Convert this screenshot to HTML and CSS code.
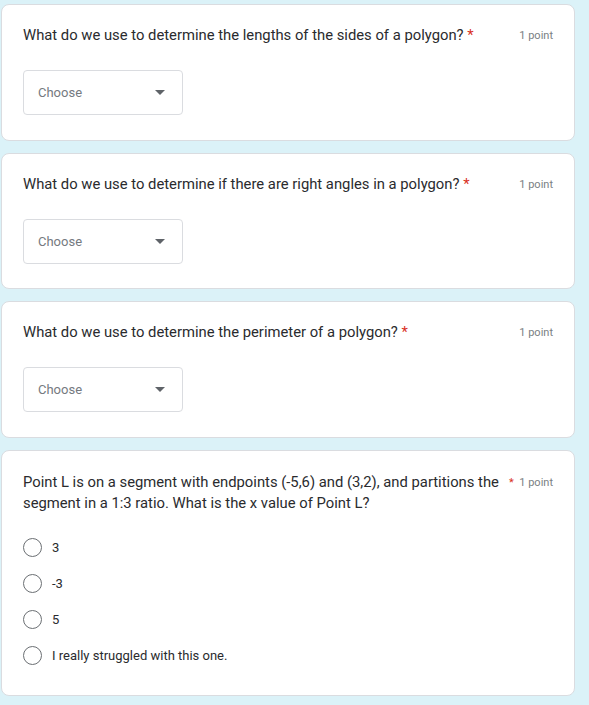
FILE: index.html
```html
<!DOCTYPE html>
<html>
<head>
<meta charset="utf-8">
<link rel="stylesheet" href="styles.css">
</head>
<body>
<div class="form">
  <div class="card">
    <div class="head">
      <div class="q">What do we use to determine the lengths of the sides of a polygon? <span class="req">*</span></div>
      <div class="pts">1 point</div>
    </div>
    <div class="select"><span>Choose</span><span class="arrow"></span></div>
  </div>
  <div class="card">
    <div class="head">
      <div class="q">What do we use to determine if there are right angles in a polygon? <span class="req">*</span></div>
      <div class="pts">1 point</div>
    </div>
    <div class="select"><span>Choose</span><span class="arrow"></span></div>
  </div>
  <div class="card">
    <div class="head">
      <div class="q">What do we use to determine the perimeter of a polygon? <span class="req">*</span></div>
      <div class="pts">1 point</div>
    </div>
    <div class="select"><span>Choose</span><span class="arrow"></span></div>
  </div>
  <div class="card card-radio">
    <div class="head">
      <div class="q q-long">Point L is on a segment with endpoints (-5,6) and (3,2), and partitions the segment in a 1:3 ratio. What is the x value of Point L?</div>
      <div class="pts"><span class="req">*</span>&nbsp; 1 point</div>
    </div>
    <div class="options">
      <div class="opt"><span class="radio"></span><span>3</span></div>
      <div class="opt"><span class="radio"></span><span>-3</span></div>
      <div class="opt"><span class="radio"></span><span>5</span></div>
      <div class="opt"><span class="radio"></span><span>I really struggled with this one.</span></div>
    </div>
  </div>
</div>
</body>
</html>
```
FILE: styles.css
```css
html, body {
  margin: 0;
  padding: 0;
  background: #dbf2f8;
}
body {
  font-family: Roboto, "Liberation Sans", Arial, sans-serif;
  color: #202124;
}
.form {
  display: flex;
  flex-direction: column;
  gap: 12px;
  padding: 4px 0 0 1px;
  width: 574px;
}
.card {
  background: #fff;
  border: 1px solid #dadce0;
  border-radius: 8px;
  padding: 20px 21px 24px 21px;
  height: 136.5px;
  box-sizing: border-box;
  display: flex;
  flex-direction: column;
}
.card-radio {
  height: 246.5px;
  padding-top: 21px;
}
.head {
  display: flex;
  justify-content: space-between;
  align-items: flex-start;
}
.q {
  font-size: 14.8px;
  line-height: 21px;
  color: #2a2b2e;
}
.q-long {
  width: 486px;
}
.req {
  color: #d93025;
}
.pts {
  font-size: 11px;
  color: #7a7f84;
  line-height: 21px;
  white-space: nowrap;
}
.select {
  margin-top: 24px;
  width: 160px;
  height: 45px;
  box-sizing: border-box;
  border: 1px solid #dadce0;
  border-radius: 4px;
  display: flex;
  align-items: center;
  justify-content: space-between;
  padding: 0 17px 0 14px;
  font-size: 13px;
  color: #757a7f;
}
.arrow {
  width: 0;
  height: 0;
  border-left: 5px solid transparent;
  border-right: 5px solid transparent;
  border-top: 5px solid #5f6368;
}
.options {
  margin-top: 16px;
  display: flex;
  flex-direction: column;
}
.opt {
  height: 36px;
  display: flex;
  align-items: center;
  gap: 10px;
  font-size: 13px;
  color: #2a2b2e;
}
.radio {
  width: 19px;
  height: 19px;
  box-sizing: border-box;
  border: 1.5px solid #6b6f73;
  border-radius: 50%;
}
```
